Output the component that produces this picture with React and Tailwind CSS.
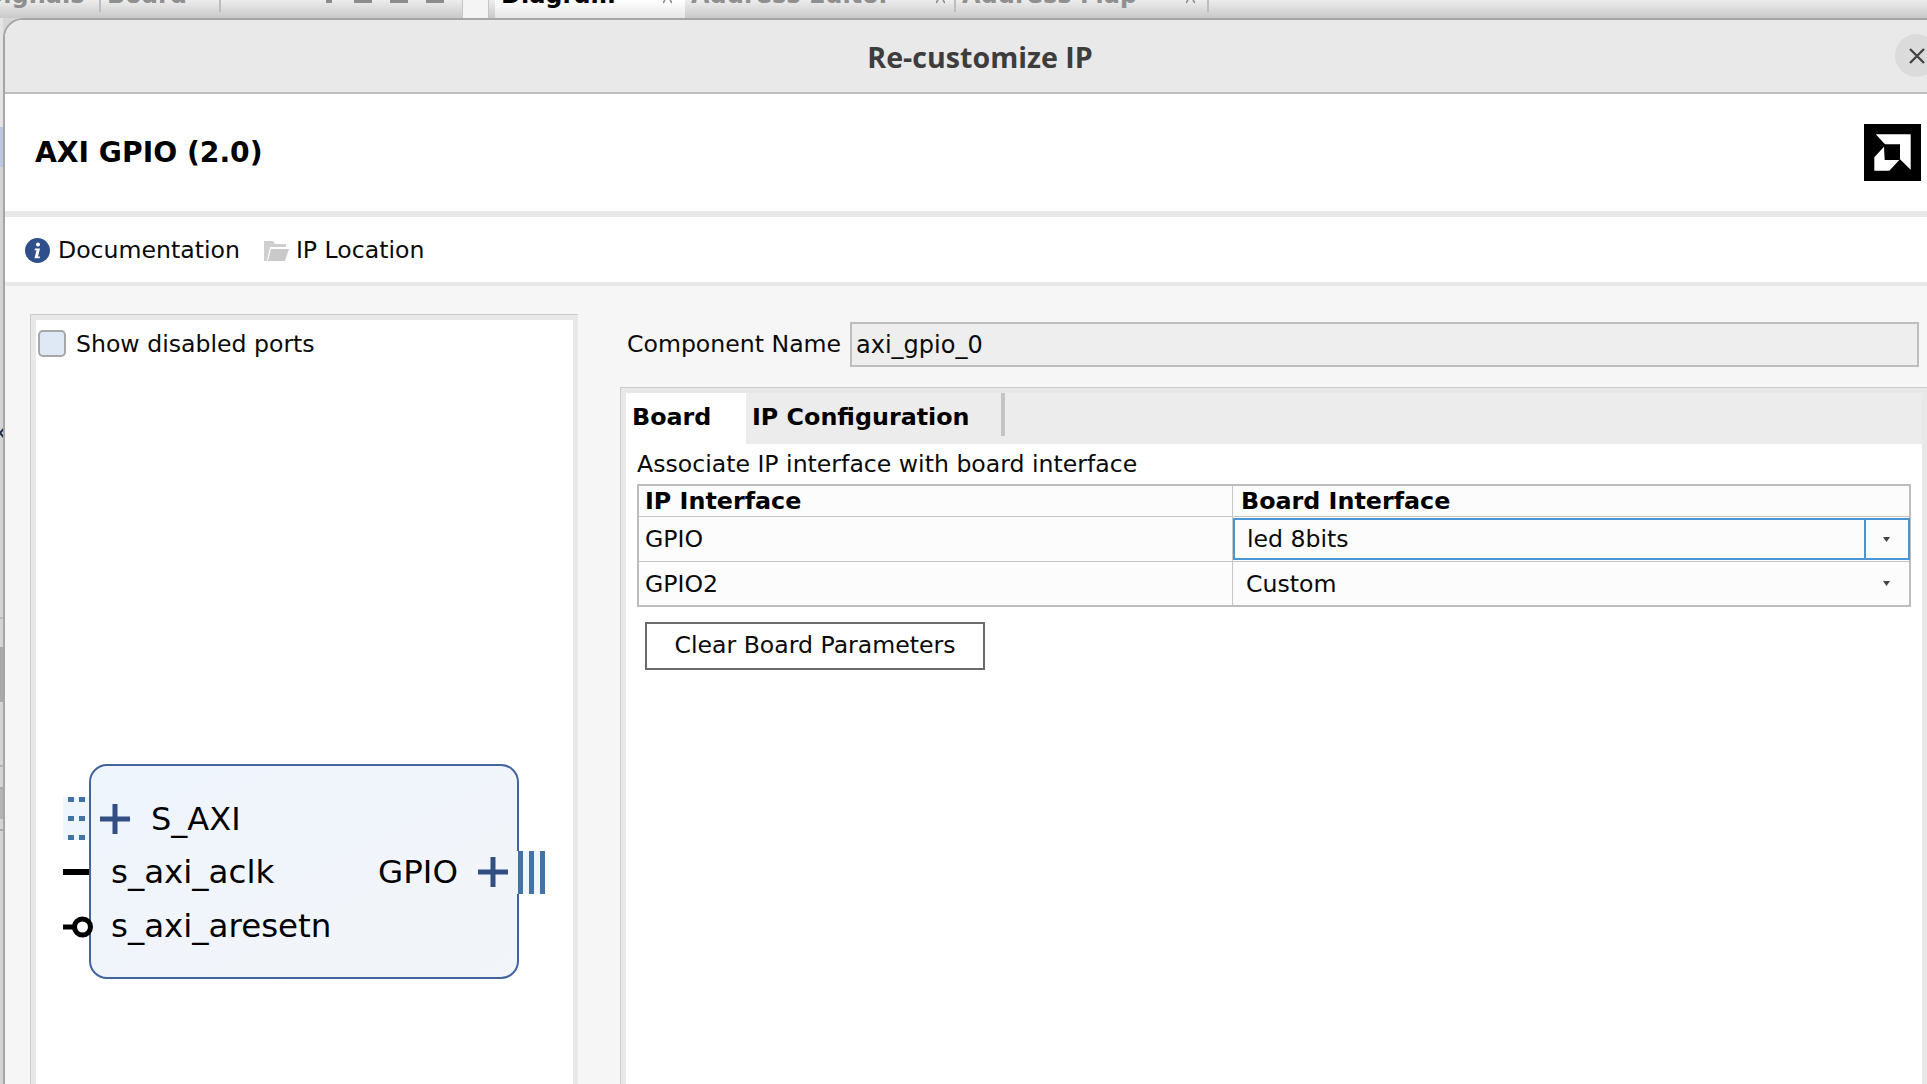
// App.jsx
const FONT = 'font-["DejaVu_Sans","Liberation_Sans",sans-serif]';

function PlusIcon() {
  return (
    <svg width="30" height="30" viewBox="0 0 30 30" className="shrink-0">
      <path d="M0 15H30M15 0V30" stroke="#324f84" strokeWidth="5" />
    </svg>
  );
}

function Arrow() {
  return (
    <svg width="7" height="5" viewBox="0 0 7 5">
      <path d="M0 0H7L3.5 5Z" fill="#444" />
    </svg>
  );
}

// tab title of the window behind the dialog, only its lower part is on screen
function BackTab({ label, width, close, dark, active }) {
  return (
    <div
      className={`relative shrink-0 overflow-hidden whitespace-nowrap pl-[6px] ${active ? 'h-[18px] bg-gradient-to-b from-[#ffffff] to-[#e6e6e6]' : 'h-[12px] border-r-2 border-[#bdbdbd]'} ${dark ? 'text-black' : ''}`}
      style={{ width }}
    >
      <span className="block -mt-[17px]">{label}</span>
      {close && (
        <svg className={`absolute top-0 ${close}`} width="9" height="4" viewBox="0 0 9 4">
          <path d="M0 3L2 0M9 3L7 0" stroke="#8c8c8c" strokeWidth="1.6" />
        </svg>
      )}
    </div>
  );
}

function TopBar() {
  return (
    <div className="h-[18px] shrink-0 flex overflow-hidden bg-gradient-to-b from-[#ededed] to-[#c9c9c9] text-[#8f8f8f] font-bold text-[24px] leading-none">
      <div className="w-[101px] h-[12px] shrink-0 overflow-hidden whitespace-nowrap border-r-2 border-[#bdbdbd]">
        <span className="block -mt-[17px] -ml-[14px]">Signals</span>
      </div>
      <BackTab label="Board" width={120} />
      <div className="w-[241px] shrink-0 flex items-start justify-end gap-[18px] pr-[18px]">
        <div className="w-[6px] h-[3px] bg-[#8c8c8c] mr-[4px]" />
        <div className="w-[18px] h-[3px] bg-[#8c8c8c]" />
        <div className="w-[18px] h-[3px] bg-[#8c8c8c]" />
        <div className="w-[18px] h-[3px] bg-[#8c8c8c]" />
      </div>
      <div className="w-[27px] shrink-0 bg-[#f4f4f4] border-x border-[#c4c4c4]" />
      <div className="w-[6px] shrink-0" />
      <BackTab label="Diagram" width={190} close="right-[13px]" dark active />
      <BackTab label="Address Editor" width={271} close="right-[9px]" />
      <BackTab label="Address Map" width={253} close="right-[12px]" />
    </div>
  );
}

function BackdropStrip() {
  return (
    <div className="w-[3px] shrink-0 bg-[#d4d4d4] flex flex-col overflow-hidden">
      <div className="h-[109px] shrink-0 bg-[#e4e4e4]" />
      <div className="h-[40px] shrink-0 bg-[#b9c8df]" />
      <div className="h-[258px] shrink-0" />
      <svg className="shrink-0" width="10" height="16" viewBox="0 0 10 16">
        <path d="M6 1L0 8L6 15" fill="none" stroke="#1c2c44" strokeWidth="2" />
      </svg>
      <div className="h-[176px] shrink-0" />
      <div className="h-[2px] shrink-0 bg-[#bcbcbc]" />
      <div className="h-[28px] shrink-0" />
      <div className="h-[55px] shrink-0 bg-[#a9a9a9]" />
      <div className="h-[63px] shrink-0" />
      <div className="h-[2px] shrink-0 bg-[#b4b4b4]" />
      <div className="h-[20px] shrink-0" />
      <div className="h-[2px] shrink-0 bg-[#a8a8a8]" />
      <div className="h-[30px] shrink-0 bg-[#b4b4b4]" />
      <div className="h-[10px] shrink-0" />
      <div className="h-[2px] shrink-0 bg-[#a8a8a8]" />
    </div>
  );
}

function IpBlock() {
  return (
    <div className="relative ml-[53px] mt-[407px] w-[430px] h-[215px] rounded-[18px] border-2 border-[#4263a0] bg-gradient-to-br from-[#eff5fd] to-[#f2f5f9] pt-[27px] text-[32.5px] text-black leading-none">
      {/* S_AXI pins */}
      <div className="absolute -left-[28px] top-[31px] w-[26px] h-[43px] bg-[#eef5fc]">
        <svg width="26" height="43" viewBox="0 0 26 43">
          <path d="M5 0h6v5h-6zM16 0h6v5h-6zM5 19h6v5h-6zM16 19h6v5h-6zM5 38h6v5h-6zM16 38h6v5h-6z" fill="#4373a6" />
        </svg>
      </div>
      <div className="absolute -left-[28px] top-[103px] w-[26px] h-[6px] bg-black" />
      <svg className="absolute -left-[28px] top-[146px]" width="32" height="30" viewBox="0 0 32 30">
        <path d="M0 15H11" stroke="#000" strokeWidth="5" />
        <circle cx="19.5" cy="15" r="8" fill="none" stroke="#000" strokeWidth="5" />
      </svg>
      {/* GPIO bus */}
      <svg className="absolute left-[426px] top-[85px]" width="28" height="43" viewBox="0 0 28 43">
        <rect width="28" height="43" fill="#eef5fc" />
        <path d="M1 0h5v43h-5zM12 0h5v43h-5zM23 0h5v43h-5z" fill="#4373a6" />
      </svg>

      <div className="h-[51px] flex items-center pl-[9px]">
        <PlusIcon />
        <span className="ml-[21px] text-[32px]">S_AXI</span>
      </div>
      <div className="h-[54px] flex items-center pt-[2px] pl-[20px] pr-[9px]">
        <span>s_axi_aclk</span>
        <span className="ml-auto mr-[20px]">GPIO</span>
        <PlusIcon />
      </div>
      <div className="h-[54px] flex items-center pt-[2px] pl-[20px]">
        <span>s_axi_aresetn</span>
      </div>
    </div>
  );
}

export default function App() {
  return (
    <div className={`w-[1927px] h-[1084px] overflow-hidden flex flex-col bg-[#d6d6d6] ${FONT}`}>
      <TopBar />
      <div className="flex flex-1 min-h-0">
        <BackdropStrip />
        <div className="relative flex-1 min-w-0 flex flex-col rounded-tl-[20px] border-l-2 border-t-2 border-[#a6a6a6] overflow-hidden bg-white text-[#0a0a0a]">
          {/* title bar */}
          <div className="h-[72px] shrink-0 bg-[#e9e9e9] flex items-center justify-center pl-[28px] pt-[2px]">
            <span className="font-['Open_Sans',sans-serif] font-bold text-[28.6px] text-[#3d3d3d]">Re-customize IP</span>
          </div>
          <div className="absolute left-[1890px] top-[14px] w-[43px] h-[43px] rounded-full bg-[#dbdbdb] flex items-center justify-center">
            <svg width="18" height="18" viewBox="0 0 18 18">
              <path d="M2 2L16 16M16 2L2 16" stroke="#444" strokeWidth="2.4" />
            </svg>
          </div>
          <div className="h-[2px] shrink-0 bg-[#bdbdbd]" />

          {/* header */}
          <div className="h-[117px] shrink-0 flex items-center justify-between pl-[30px] pr-[6px]">
            <span className="font-bold text-[28.2px] text-black pt-[2px]">AXI GPIO (2.0)</span>
            <svg width="57" height="57" viewBox="0 0 57 57">
              <rect width="57" height="57" fill="#000" />
              <path d="M11.7 10.3H46.7V45.7L36 35.3V20.3H21Z" fill="#fff" />
              <path d="M20 22.7L10.3 33.3V46.7H25.3L35.3 36H20.7Z" fill="#fff" />
            </svg>
          </div>
          <div className="h-[6px] shrink-0 bg-[#e8e8e8]" />

          {/* toolbar */}
          <div className="h-[65px] shrink-0 flex items-center pl-[20px] pt-[1px] text-[23.6px]">
            <svg width="25" height="25" viewBox="0 0 25 25">
              <circle cx="12.5" cy="12.5" r="12.5" fill="#2f4f8a" />
              <path d="M13 4.5a2 2 0 1 1-.01 0zM10 10.5h5l-2 8h2l-.5 1.8h-5l2-8h-2z" fill="#fff" />
            </svg>
            <span className="ml-[8px] pt-[1px]">Documentation</span>
            <svg className="ml-[24px]" width="25" height="22" viewBox="0 0 25 22">
              <path d="M0 2h9l2 3h11v3H6L3 22H0z" fill="#cfcfcf" />
              <path d="M7 10h18l-4 12H4z" fill="#c9c9c9" />
            </svg>
            <span className="ml-[7px] pt-[1px]">IP Location</span>
          </div>
          <div className="h-[4px] shrink-0 bg-[#e8e8e8]" />

          {/* content */}
          <div className="flex-1 min-h-0 bg-[#f6f6f6] flex pt-[28px] pl-[25px] text-[23.6px] overflow-hidden">
            <div className="w-[548px] h-[900px] shrink-0 border-l border-t border-[#cccccc]">
              <div className="h-full border-[5px] border-[#e8e8e8] bg-white">
                <div className="flex items-center h-[27px] mt-[10px] ml-[2px]">
                  <div className="w-[28px] h-[27px] rounded-[5px] border-2 border-[#a8a8a8] bg-[#dfe9f6]" />
                  <span className="ml-[10px] mt-[3px]">Show disabled ports</span>
                </div>
                <IpBlock />
              </div>
            </div>

            <div className="ml-[42px] flex-1 min-w-0 pt-[8px]">
              <div className="flex items-center h-[45px] pl-[7px] pr-[8px]">
                <span className="w-[223px] shrink-0 whitespace-nowrap pt-[1px]">Component Name</span>
                <div className="flex-1 h-[45px] border-2 border-[#bdbdbd] bg-[#eeeeee] flex items-center pl-[4px] pt-[1px] text-[24px]">axi_gpio_0</div>
              </div>

              <div className="mt-[20px] h-[800px] border-l border-t border-[#cccccc]">
                <div className="h-full border-[5px] border-[#e8e8e8] bg-white">
                  <div className="h-[51px] bg-[#ececec] flex font-bold text-black text-[23.8px]">
                    <div className="w-[120px] bg-white pl-[6px] pb-[1px] flex items-center">Board</div>
                    <div className="w-[259px] h-[43px] pl-[6px] pt-[7px] flex items-center border-r-4 border-[#c4c4c4]">IP Configuration</div>
                  </div>
                  <div className="pl-[11px] pr-[11px]">
                    <div className="h-[40px] flex items-center pt-[2px]">Associate IP interface with board interface</div>
                    <div className="border-2 border-[#bdbdbd] bg-[#fcfcfc] grid grid-cols-[594px_1fr] grid-rows-[31px_45px_43px]">
                      <div className="pl-[6px] pt-[2px] flex items-center font-bold text-black text-[23.8px] border-r border-b border-[#c6c6c6]">IP Interface</div>
                      <div className="pl-[8px] pt-[2px] flex items-center font-bold text-black text-[23.8px] border-b border-[#c6c6c6]">Board Interface</div>
                      <div className="pl-[6px] pt-[2px] flex items-center border-r border-b border-[#c6c6c6]">GPIO</div>
                      <div className="flex items-stretch border-b border-[#c6c6c6]">
                        <div className="flex-1 flex border-2 border-[#4a96d2] m-px ml-0 -mr-px">
                          <div className="flex-1 pl-[12px] pt-[2px] flex items-center">led 8bits</div>
                          <div className="w-[44px] flex items-center justify-center pr-[2px] border-l-2 border-[#4a96d2]">
                            <Arrow />
                          </div>
                        </div>
                      </div>
                      <div className="pl-[6px] pt-[2px] flex items-center border-r border-[#c6c6c6]">GPIO2</div>
                      <div className="flex items-center pl-[13px] pr-[19px] justify-between">
                        <span className="pt-[2px]">Custom</span>
                        <Arrow />
                      </div>
                    </div>
                    <button className="block ml-[8px] mt-[15px] w-[340px] h-[48px] border-2 border-[#6b6b6b] bg-white">Clear Board Parameters</button>
                  </div>
                </div>
              </div>
            </div>
          </div>
        </div>
      </div>
    </div>
  );
}
